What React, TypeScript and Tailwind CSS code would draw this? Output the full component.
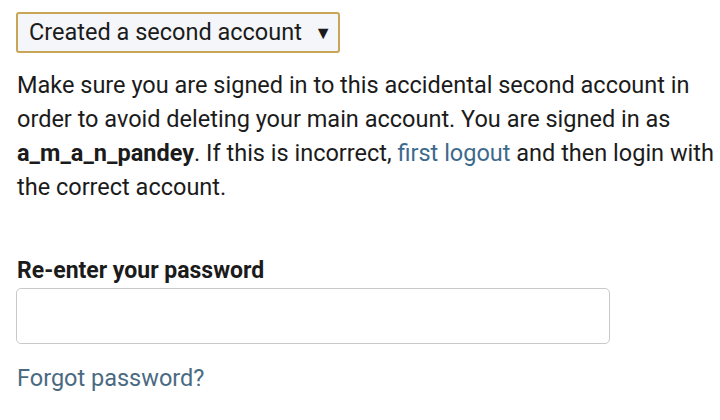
export default function App() {
  return (
    <div className="w-[720px] h-[420px] overflow-hidden bg-white text-[#1b1b1b] font-['Roboto',sans-serif]">
      <div className="pl-4 pr-1 pt-3">
        <div className="flex h-[41px] w-[324px] items-center justify-between rounded-[3px] border-2 border-[#c9a558] bg-[#f4f6f9] pl-[11px] pr-[6px] text-[23.5px] leading-none">
          <span>Created a second account</span>
          <span className="text-[18px]">▼</span>
        </div>

        <p className="mt-[15px] pl-px text-[23.5px] leading-[34px]">
          Make sure you are signed in to this accidental second account in order to avoid deleting your main account. You are signed in as{" "}
          <b className="font-bold">a_m_a_n_pandey</b>. If this is incorrect,{" "}
          <a className="text-[#3d6a8c]">first logout</a> and then login with the correct account.
        </p>

        <div className="mt-[53px] pl-px text-[23px] leading-[28px] font-bold">Re-enter your password</div>
        <div className="mt-[3px] h-[56px] w-[594px] rounded-[5px] border border-[#c9c9c9]" />

        <a className="mt-5 block pl-px text-[23.5px] leading-[28px] text-[#4a6a82]">Forgot password?</a>
      </div>
    </div>
  );
}
